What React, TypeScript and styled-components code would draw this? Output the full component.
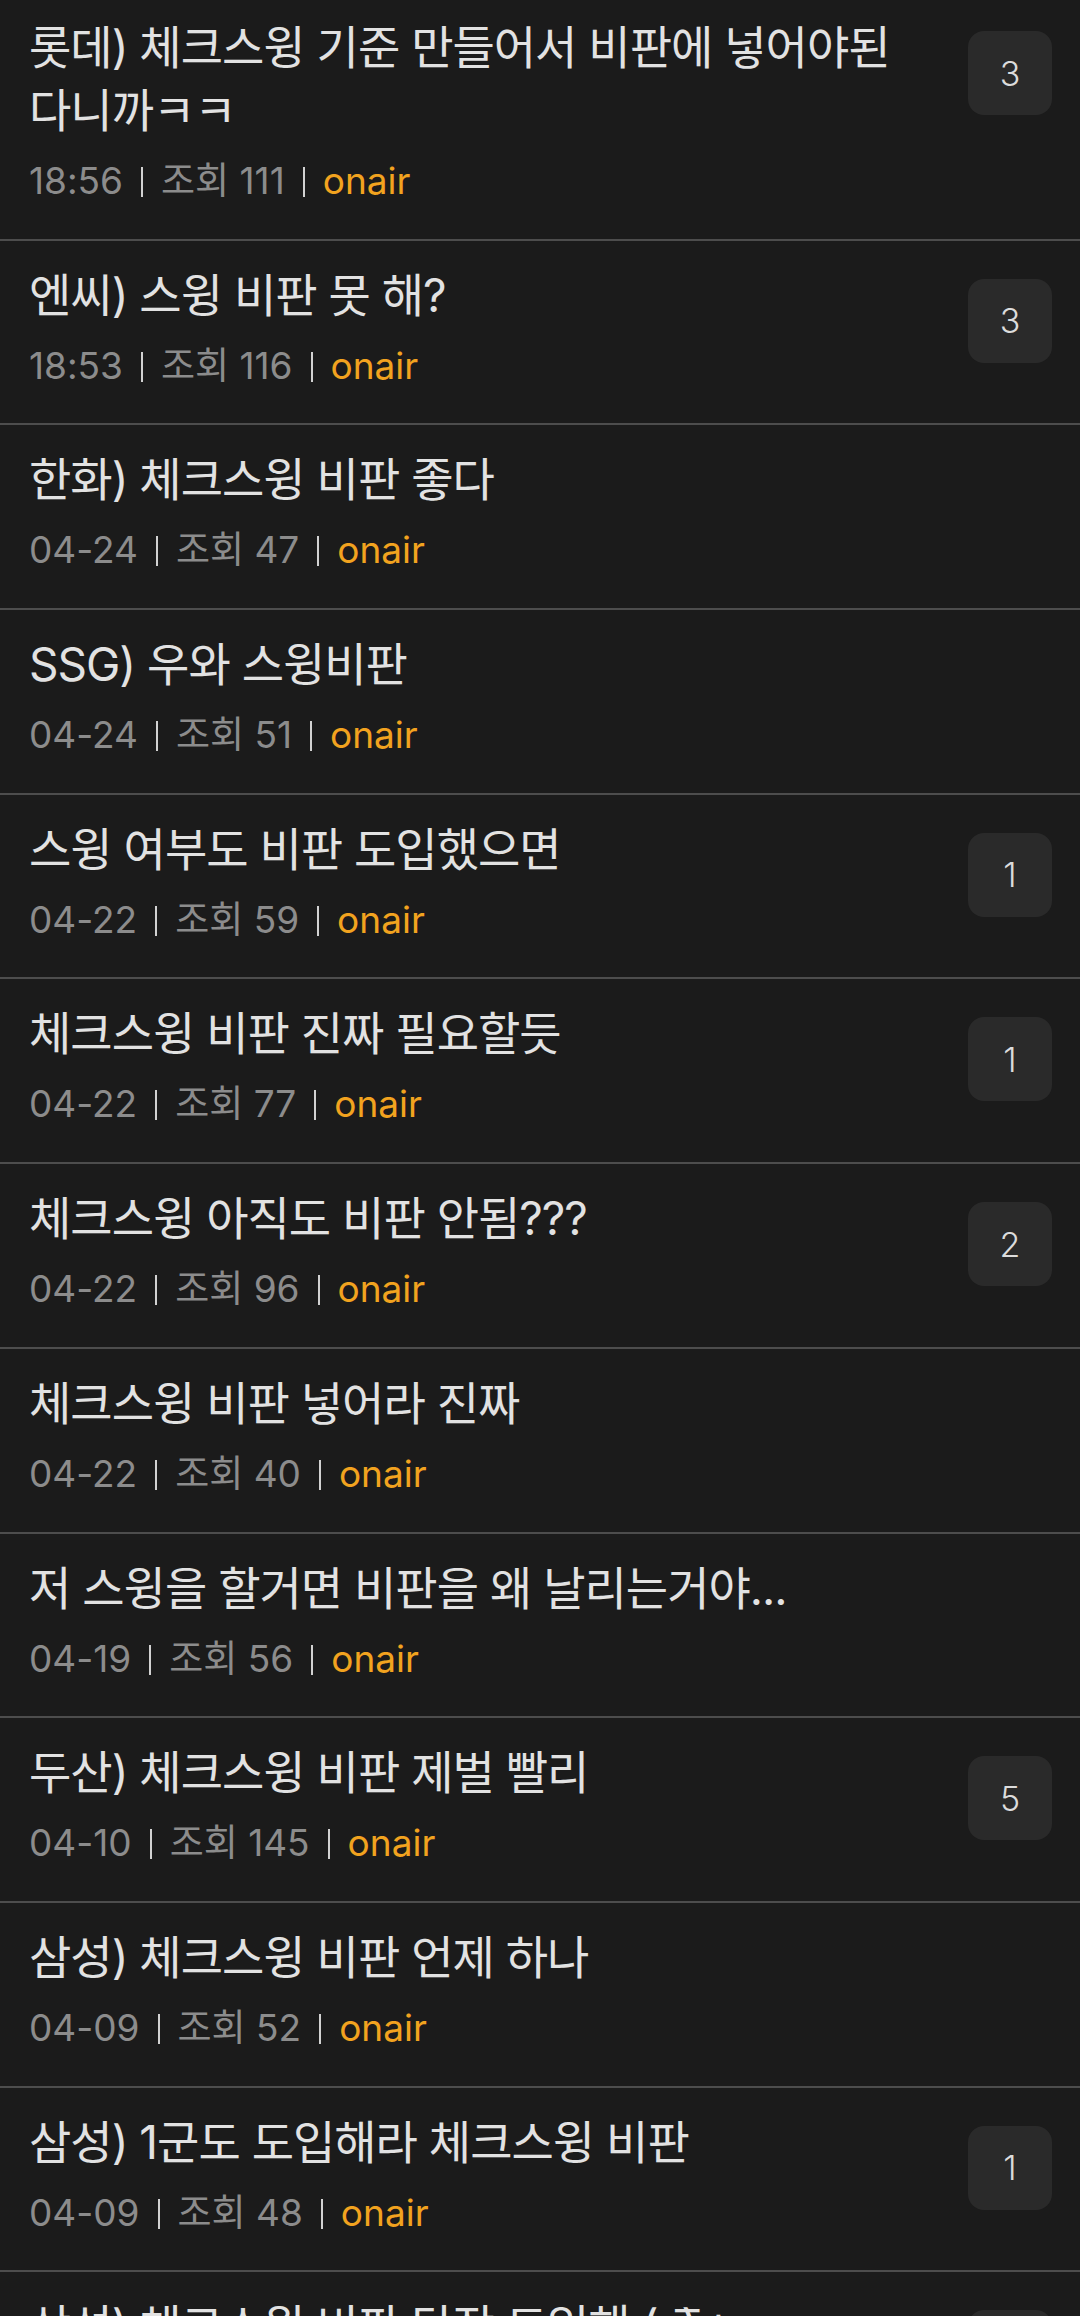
import styled, { createGlobalStyle } from 'styled-components'

const GlobalStyle = createGlobalStyle`
  html, body {
    margin: 0;
    padding: 0;
    background: #1b1b1b;
    overflow: hidden;
  }
  body {
    font-family: Inter, "Noto Sans CJK KR", sans-serif;
    -webkit-font-smoothing: antialiased;
  }
`

type Post = {
  title: string
  date: string
  views: number
  comments?: number
}

const posts: Post[] = [
  { title: '롯데) 체크스윙 기준 만들어서 비판에 넣어야된다니까ㅋㅋ', date: '18:56', views: 111, comments: 3 },
  { title: '엔씨) 스윙 비판 못 해?', date: '18:53', views: 116, comments: 3 },
  { title: '한화) 체크스윙 비판 좋다', date: '04-24', views: 47 },
  { title: 'SSG) 우와 스윙비판', date: '04-24', views: 51 },
  { title: '스윙 여부도 비판 도입했으면', date: '04-22', views: 59, comments: 1 },
  { title: '체크스윙 비판 진짜 필요할듯', date: '04-22', views: 77, comments: 1 },
  { title: '체크스윙 아직도 비판 안됨???', date: '04-22', views: 96, comments: 2 },
  { title: '체크스윙 비판 넣어라 진짜', date: '04-22', views: 40 },
  { title: '저 스윙을 할거면 비판을 왜 날리는거야...', date: '04-19', views: 56 },
  { title: '두산) 체크스윙 비판 제벌 빨리', date: '04-10', views: 145, comments: 5 },
  { title: '삼성) 체크스윙 비판 언제 하나', date: '04-09', views: 52 },
  { title: '삼성) 1군도 도입해라 체크스윙 비판', date: '04-09', views: 48, comments: 1 },
  { title: '삼성) 체크스윙 비판 당장 도입해 ( ̄ ̄)ㅅ', date: '04-09', views: 33, comments: 1 },
]

const List = styled.ul`
  list-style: none;
  margin: -7px 0 0;
  padding: 0;
`

const Row = styled.li`
  display: flex;
  align-items: flex-start;
  gap: 48px;
  padding: 23px 28px 33.7px 29px;
  border-bottom: 2px solid #4d4d4d;
`

const Body = styled.div`
  flex: 1;
  min-width: 0;
`

const Title = styled.div`
  font-size: 46px;
  line-height: 63px;
  letter-spacing: -1px;
  color: #e2e2e2;
`

const Meta = styled.div`
  margin-top: 15px;
  font-size: 37px;
  line-height: 48px;
  color: #8c8c8c;
  white-space: nowrap;
`

const Bar = styled.span`
  display: inline-block;
  width: 2px;
  height: 30px;
  margin: 0 18px;
  vertical-align: -3px;
  background: #d2d2d2;
`

const Author = styled.span`
  color: #f2a31f;
`

const Badge = styled.div`
  flex: none;
  width: 84px;
  height: 84px;
  margin-top: 15px;
  border-radius: 16px;
  background: #2a2a2a;
  color: #dcdcdc;
  font-size: 34px;
  font-weight: 300;
  display: flex;
  align-items: center;
  justify-content: center;
`

const App = () => {
  return (
    <>
      <GlobalStyle />
      <List>
        {posts.map((p, i) => (
          <Row key={i}>
            <Body>
              <Title>{p.title}</Title>
              <Meta>
                {p.date}
                <Bar />
                조회 {p.views}
                <Bar />
                <Author>onair</Author>
              </Meta>
            </Body>
            {p.comments ? <Badge>{p.comments}</Badge> : null}
          </Row>
        ))}
      </List>
    </>
  )
}

export default App
